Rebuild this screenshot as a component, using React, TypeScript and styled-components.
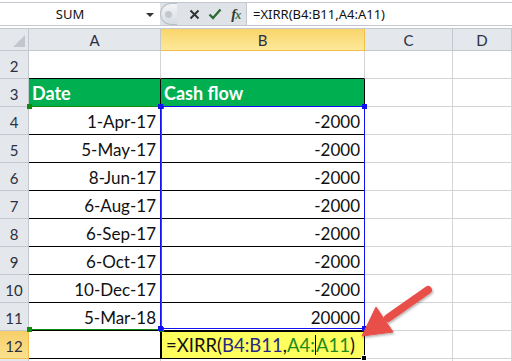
import styled, { createGlobalStyle } from "styled-components";

const GlobalStyle = createGlobalStyle`
  html, body {
    margin: 0;
    padding: 0;
    background: #ffffff;
  }
  body {
    font-family: Lato, "Liberation Sans", sans-serif;
  }
`;

const Page = styled.div`
  position: relative;
  width: 512px;
  height: 361px;
  overflow: hidden;
  background: #ffffff;
`;

const FormulaBar = styled.div`
  display: flex;
  margin-top: 2px;
  height: 24px;
  box-sizing: border-box;
  border-top: 1px solid #c3c8cf;
  border-bottom: 1px solid #c3c8cf;
  font-family: "Noto Sans", "Liberation Sans", sans-serif;
  font-size: 13px;
  color: #111;
`;

const NameBox = styled.div`
  position: relative;
  width: 160px;
  display: flex;
  align-items: center;
  justify-content: center;
  padding-right: 20px;
  box-sizing: border-box;
  background: #fff;
`;

const Caret = styled.span`
  position: absolute;
  right: 6px;
  top: 10px;
  width: 0;
  height: 0;
  border-left: 4px solid transparent;
  border-right: 4px solid transparent;
  border-top: 4px solid #333;
`;

const Controls = styled.div`
  width: 87px;
  display: flex;
  align-items: center;
  background: #dfe3e8;
  border-right: 1px solid #c3c8cf;
  box-sizing: border-box;
`;

const Knob = styled.div`
  width: 16px;
  height: 20px;
  margin-right: 8px;
  display: flex;
  align-items: center;
  justify-content: center;
  border-radius: 11px 0 0 11px;
  border: 1px solid #b9bfc7;
  border-right: none;
  background: linear-gradient(#f3f4f6, #d8dce1);
  &::after {
    content: "";
    width: 7px;
    height: 7px;
    border-radius: 50%;
    background: #c4c8cd;
  }
`;

const IconSlot = styled.span`
  width: 21px;
  display: flex;
  justify-content: center;
  align-items: center;
`;

const Fx = styled.span`
  font-family: "Liberation Serif", serif;
  font-style: italic;
  font-weight: bold;
  font-size: 15px;
  color: #2f3b2f;
  letter-spacing: -1px;
  & > b {
    color: #3c6b3c;
    font-size: 12px;
  }
`;

const FormulaInput = styled.div`
  flex: 1;
  display: flex;
  align-items: center;
  padding-left: 6px;
  background: #fff;
`;

const Sheet = styled.div`
  position: relative;
  margin-top: 2px;
  display: grid;
  grid-template-columns: 29px 132px 204px 88px 1fr;
  grid-template-rows: 22px;
  grid-auto-rows: 28px;
  border-top: 1px solid #c3c8cf;
`;

const ColHead = styled.div<{ $active?: boolean }>`
  display: flex;
  align-items: center;
  justify-content: center;
  box-sizing: border-box;
  border-right: 1px solid ${(p) => (p.$active ? "#f0c04a" : "#c3c8cf")};
  border-bottom: 1px solid ${(p) => (p.$active ? "#f0c04a" : "#c3c8cf")};
  background: ${(p) =>
    p.$active ? "linear-gradient(#f9d56a, #fde89a)" : "#e4e7eb"};
  font-size: 15px;
  color: #2b3040;
`;

const Corner = styled.div`
  position: relative;
  box-sizing: border-box;
  border-right: 1px solid #c3c8cf;
  border-bottom: 1px solid #c3c8cf;
  background: #e4e7eb;
  &::after {
    content: "";
    position: absolute;
    right: 3px;
    bottom: 3px;
    width: 0;
    height: 0;
    border-left: 12px solid transparent;
    border-bottom: 12px solid #c3c7cc;
  }
`;

const RowHead = styled.div<{ $active?: boolean }>`
  display: flex;
  align-items: flex-end;
  justify-content: center;
  padding-bottom: 3px;
  box-sizing: border-box;
  border-right: 1px solid ${(p) => (p.$active ? "#f0c04a" : "#c3c8cf")};
  border-bottom: 1px solid ${(p) => (p.$active ? "#f0c04a" : "#c3c8cf")};
  background: ${(p) =>
    p.$active ? "linear-gradient(#f7cf6a, #fbe08e)" : "#e4e7eb"};
  font-size: 15px;
  color: #2b3040;
`;

const Cell = styled.div<{
  $edge?: boolean;
  $base?: boolean;
  $head?: boolean;
}>`
  display: flex;
  align-items: flex-end;
  justify-content: ${(p) => (p.$head ? "flex-start" : "flex-end")};
  padding: 0 4px 2px 3px;
  box-sizing: border-box;
  border-right: 1px solid ${(p) => (p.$edge ? "#000" : "#d4d4d4")};
  border-bottom: 1px solid ${(p) => (p.$base ? "#000" : "#d4d4d4")};
  background: ${(p) => (p.$head ? "#00b050" : "#fff")};
  color: ${(p) => (p.$head ? "#fff" : "#111")};
  font-size: ${(p) => (p.$head ? "18px" : "17px")};
  font-weight: ${(p) => (p.$head ? 700 : 400)};
  white-space: nowrap;
`;

const EditCell = styled.div`
  display: flex;
  align-items: center;
  padding-left: 4px;
  box-sizing: border-box;
  border: 1px solid #000;
  background: #ffff5e;
  font-size: 18.5px;
  color: #111;
  white-space: nowrap;
  position: relative;
  &::after {
    content: "";
    position: absolute;
    right: -3px;
    bottom: -3px;
    width: 4px;
    height: 4px;
    background: #000;
    border: 1px solid #fff;
  }
`;

const Ref = styled.span<{ $tone: "blue" | "green" }>`
  color: ${(p) => (p.$tone === "blue" ? "#27278a" : "#1e8a1e")};
`;

const Cursor = styled.span`
  display: inline-block;
  width: 1px;
  height: 20px;
  background: #000;
  vertical-align: -4px;
`;

const RangeBox = styled.div<{ $color: string; $noLeft?: boolean }>`
  position: absolute;
  box-sizing: border-box;
  border: 1px solid ${(p) => p.$color};
  ${(p) => (p.$noLeft ? "border-left-color: transparent;" : "")}
  pointer-events: none;
`;

const Handle = styled.span<{ $color: string; $x: "l" | "r"; $y: "t" | "b" }>`
  position: absolute;
  width: 5px;
  height: 5px;
  background: ${(p) => p.$color};
  ${(p) => (p.$x === "l" ? "left: -3px;" : "right: -3px;")}
  ${(p) => (p.$y === "t" ? "top: -3px;" : "bottom: -3px;")}
`;

const ArrowLayer = styled.svg`
  position: absolute;
  left: 350px;
  top: 278px;
  pointer-events: none;
`;

const dates = [
  "1-Apr-17",
  "5-May-17",
  "8-Jun-17",
  "6-Aug-17",
  "6-Sep-17",
  "6-Oct-17",
  "10-Dec-17",
  "5-Mar-18",
];
const flows = ["-2000", "-2000", "-2000", "-2000", "-2000", "-2000", "-2000", "20000"];

function Corners({ color }: { color: string }) {
  return (
    <>
      <Handle $color={color} $x="l" $y="t" />
      <Handle $color={color} $x="r" $y="t" />
      <Handle $color={color} $x="l" $y="b" />
      <Handle $color={color} $x="r" $y="b" />
    </>
  );
}

function Row({ n, date, flow }: { n: number; date: string; flow: string }) {
  return (
    <>
      <RowHead>{n}</RowHead>
      <Cell $edge $base>{date}</Cell>
      <Cell $edge $base>{flow}</Cell>
      <Cell />
      <Cell />
    </>
  );
}

export default function App() {
  return (
    <Page>
      <GlobalStyle />
      <FormulaBar>
        <NameBox>
          SUM
          <Caret />
        </NameBox>
        <Controls>
          <Knob />
          <IconSlot>
            <svg width="11" height="11" viewBox="0 0 11 11">
              <path d="M1.5 1.5 L9.5 9.5 M9.5 1.5 L1.5 9.5" stroke="#333" strokeWidth="2" />
            </svg>
          </IconSlot>
          <IconSlot>
            <svg width="14" height="12" viewBox="0 0 14 12">
              <path d="M1.5 6.5 L5 10 L12.5 1.5" stroke="#2f6a32" strokeWidth="2.4" fill="none" />
            </svg>
          </IconSlot>
          <IconSlot>
            <Fx>
              f<b>x</b>
            </Fx>
          </IconSlot>
        </Controls>
        <FormulaInput>=XIRR(B4:B11,A4:A11)</FormulaInput>
      </FormulaBar>

      <Sheet>
        <Corner />
        <ColHead>A</ColHead>
        <ColHead $active>B</ColHead>
        <ColHead>C</ColHead>
        <ColHead>D</ColHead>

        <RowHead>2</RowHead>
        <Cell $base />
        <Cell $base />
        <Cell />
        <Cell />

        <RowHead>3</RowHead>
        <Cell $head $edge $base>Date</Cell>
        <Cell $head $edge $base>Cash flow</Cell>
        <Cell />
        <Cell />

        {dates.map((d, i) => (
          <Row key={d} n={i + 4} date={d} flow={flows[i]} />
        ))}

        <RowHead $active>12</RowHead>
        <Cell $edge $base />
        <EditCell>
          =XIRR(<Ref $tone="blue">B4:B11</Ref>,<Ref $tone="green">A4:</Ref>
          <Cursor />
          <Ref $tone="green">A11</Ref>)
        </EditCell>
        <Cell />
        <Cell />

        <RowHead />
        <Cell />
        <Cell />
        <Cell />
        <Cell />

        <RangeBox $color="#108a10" $noLeft style={{ left: 29, top: 77, width: 133, height: 224 }}>
          <Corners color="#108a10" />
        </RangeBox>
        <RangeBox $color="#1010f0" style={{ left: 160, top: 77, width: 205, height: 223 }}>
          <Corners color="#1010f0" />
        </RangeBox>
      </Sheet>

      <ArrowLayer width="90" height="70" viewBox="0 0 90 70">
        <defs>
          <filter id="sh" x="-20%" y="-20%" width="140%" height="140%">
            <feDropShadow dx="1" dy="1.5" stdDeviation="1.2" floodColor="#000" floodOpacity="0.3" />
          </filter>
        </defs>
        <g filter="url(#sh)" fill="#e8504a" stroke="#e8504a">
          <line x1="78" y1="12" x2="38" y2="40" strokeWidth="8" strokeLinecap="round" />
          <polygon points="12,58 26,29 43,54" strokeWidth="1" strokeLinejoin="round" />
        </g>
      </ArrowLayer>
    </Page>
  );
}
